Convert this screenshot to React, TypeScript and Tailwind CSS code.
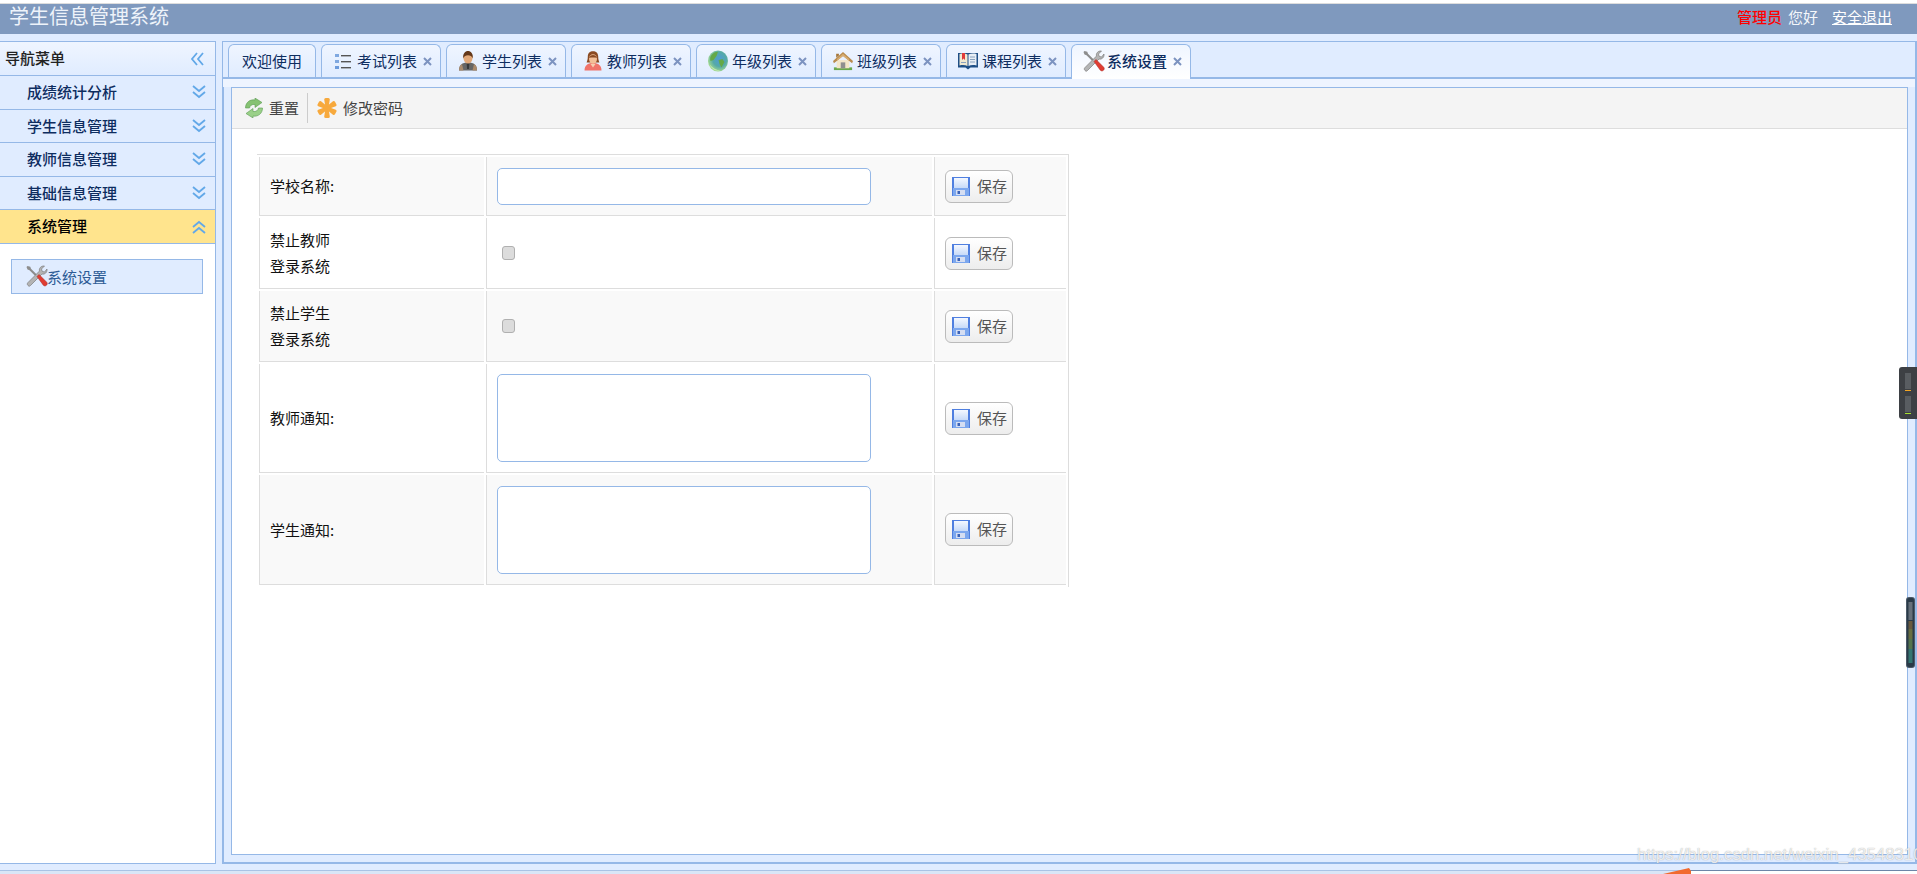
import type { ReactNode } from "react";

const IconList = () => (
  <svg width="16" height="16" viewBox="0 0 16 16">
    <rect x="0" y="1" width="4" height="3" fill="#7fa8e0" />
    <rect x="0" y="7" width="4" height="3" fill="#7fa8e0" />
    <rect x="0" y="13" width="4" height="3" fill="#6c9bdc" />
    <rect x="6" y="2" width="10" height="1.400" fill="#555" />
    <rect x="6" y="8" width="10" height="1.400" fill="#555" />
    <rect x="6" y="14" width="10" height="1.400" fill="#555" />
  </svg>
);

const IconStudent = () => (
  <svg width="20" height="20" viewBox="0 0 20 20">
    <path d="M1 19.500c0-5.500 3-8 9-8s9 2.500 9 8z" fill="#666" />
    <path d="M1 19.500c0-3.500 1-5.500 3-6.500l1.500 6.500zM19 19.500c0-3.500-1-5.500-3-6.500l-1.500 6.500z" fill="#a98a6c" />
    <path d="M8.600 12h2.800l-.5 6H9.100z" fill="#383838" />
    <ellipse cx="10" cy="7" rx="4.500" ry="5.500" fill="#e2a878" />
    <path d="M5.300 7.500C4.500 2.500 7.300 0 10 0s5.500 2.500 4.700 7.500c-.7-2.300-2.500-3.300-4.700-3.300S6 5.200 5.300 7.500z" fill="#643819" />
  </svg>
);

const IconTeacher = () => (
  <svg width="20" height="20" viewBox="0 0 20 20">
    <path d="M1.500 19.500c0-5 3-7.500 8.500-7.500s8.500 2.500 8.500 7.500z" fill="#f0736a" />
    <path d="M4.800 5.500C4.800 2 7 .3 10 .3s5.200 1.700 5.200 5.200c0 3 .6 4.500 1.200 6H3.600c.6-1.500 1.200-3 1.200-6z" fill="#8a4a22" />
    <ellipse cx="10" cy="8" rx="4" ry="4.800" fill="#f3bf98" />
    <path d="M6 7C7 4.600 8.500 4 10 4s3 .6 4 3c-2-.6-6-.6-8 0z" fill="#8a4a22" />
    <path d="M7.500 13h5L10 16.500z" fill="#f6cdb0" />
  </svg>
);

const IconGlobe = () => (
  <svg width="20" height="22" viewBox="0 0 20 22">
    <defs>
      <radialGradient id="globe" cx="58%" cy="42%" r="62%">
        <stop offset="0%" stopColor="#4f9bd6" />
        <stop offset="55%" stopColor="#55a9a8" />
        <stop offset="100%" stopColor="#a8de8c" />
      </radialGradient>
    </defs>
    <ellipse cx="10" cy="11" rx="10" ry="10.500" fill="url(#globe)" />
    <path d="M4 4.500C6 2.500 8 1.800 10 1.800L8.500 6 5.500 10l-3 1c-.8-2.500-.2-4.500 1.500-6.500zM10.500 10l4-1 2 3-3 5.500-2-3.500z" fill="#64a948" />
    <path d="M1.500 14.500C3.500 19 8 21.500 12.500 20.800 8.500 20 4.500 18 1.500 14.500z" fill="#c4e8ae" />
  </svg>
);

const IconHouse = () => (
  <svg width="22" height="20" viewBox="0 0 22 20">
    <rect x="1" y="17" width="20" height="3" fill="#69a84c" />
    <path d="M4 9h14v9H4z" fill="#f3e6c8" />
    <path d="M8.500 11.500h5V18h-5z" fill="#8f8f8f" />
    <path d="M11 0 0 10l1 2.500L11 4.500l10 8 1-2.500z" fill="#b98b4f" />
    <path d="M3.500 6.500V2h3v2z" fill="#a5763a" />
    <path d="M11 4.500 5 9.500 4 8 11 2l7 6-1 1.500z" fill="#d7ad72" />
  </svg>
);

const IconBook = () => (
  <svg width="20" height="18" viewBox="0 0 20 18">
    <path d="M0 1h20v14.500h-7.500L10 17.500l-2.500-2H0z" fill="#1f4f86" />
    <path d="M1.500 2c3-.8 6-.6 8 .5V14c-2-1-5-1.200-8-.5z" fill="#f0e8d0" />
    <path d="M18.500 2c-3-.8-6-.6-8 .5V14c2-1 5-1.200 8-.5z" fill="#e8eef5" />
    <path d="M4 1h3v7L5.500 6.500 4 8z" fill="#e03a3a" />
    <path d="M12 5h5M12 7.500h5M12 10h5M3 10.500h5" stroke="#8aa2be" strokeWidth="1" />
  </svg>
);

const IconTools = () => (
  <svg width="22" height="22" viewBox="0 0 22 22">
    <path d="M1.500 1 .5 2l1 2.500 2 .7 6 6 1.500-1.500-6-6-.7-2z" fill="#8d8d8d" />
    <path d="M2 20.500c-1-1-1-2 0-3L13.500 6c-.8-2.500 1.500-5.500 5-5L15.500 4l.7 2.300 2.300.7L21 4c.5 3.500-2.500 5.800-5 5L4.500 20.500c-1 1-1.500 1-2.500 0z" fill="#b4b4b4" stroke="#6f6f6f" strokeWidth=".6" />
    <path d="M11 11.500 13 9.500l7.500 7.500c1 1 1 2.200 0 3.200s-2.200 1-3.200 0z" fill="#e03c32" stroke="#a62720" strokeWidth=".5" />
  </svg>
);

const IconRefresh = () => (
  <svg width="18" height="20" viewBox="0 0 18 20">
    <path d="M.5 10C.5 4.500 5 1 10 2V0l7 4.500L10 9.500V6.500C7 6 5 7.500 4.500 10z" fill="#86c272" stroke="#5a9a52" strokeWidth=".6" />
    <path d="M17.500 10c0 5.500-4.500 9-9.500 8v2L1 15.500l7-5v3c3 .5 5-1 5.500-3.500z" fill="#9ad088" stroke="#5a9a52" strokeWidth=".6" />
  </svg>
);

const IconStar = () => (
  <svg width="20" height="20" viewBox="0 0 20 20">
    <g fill="#f7a93c">
      <path d="M7.200 1.500Q7.200 0 8.700 0h2.600q1.500 0 1.500 1.500L11.400 10l1.400 8.500q0 1.500-1.500 1.500H8.700q-1.500 0-1.500-1.500L8.600 10z" />
      <path d="M7.200 1.500Q7.200 0 8.700 0h2.600q1.500 0 1.500 1.500L11.400 10l1.400 8.500q0 1.500-1.500 1.500H8.700q-1.500 0-1.500-1.500L8.600 10z" transform="rotate(60 10 10)" />
      <path d="M7.200 1.500Q7.200 0 8.700 0h2.600q1.500 0 1.500 1.500L11.400 10l1.400 8.500q0 1.500-1.500 1.500H8.700q-1.500 0-1.500-1.500L8.600 10z" transform="rotate(-60 10 10)" />
    </g>
  </svg>
);

const IconSave = () => (
  <svg width="18" height="19" viewBox="0 0 18 19">
    <defs>
      <linearGradient id="disk" x1="0" y1="0" x2="0" y2="1">
        <stop offset="0%" stopColor="#f4f8ff" />
        <stop offset="100%" stopColor="#c7daf8" />
      </linearGradient>
    </defs>
    <rect width="18" height="19" fill="#4f7fe0" />
    <rect x="2" y="1" width="14" height="10" fill="url(#disk)" />
    <rect x="1" y="11" width="16" height="8" fill="#7ca7ee" />
    <rect x="4" y="13" width="9" height="5" fill="#d5def2" />
    <rect x="5.500" y="14" width="2.500" height="3" fill="#3a62b8" />
  </svg>
);

const Chevrons = ({ dir }: { dir: "down" | "up" | "left" }) => {
  const rotate = dir === "down" ? 0 : dir === "up" ? 180 : 90;
  return (
    <svg width="14" height="14" viewBox="0 0 14 14" style={{ transform: `rotate(${rotate}deg)` }}>
      <path d="M1 1 7 6l6-5M1 7l6 5 6-5" fill="none" stroke="#62a8e8" strokeWidth="1.800" />
    </svg>
  );
};

const CloseX = () => (
  <svg width="9" height="9" viewBox="0 0 9 9">
    <path d="M1 1l7 7M8 1 1 8" stroke="#7c93c0" strokeWidth="2" />
  </svg>
);

const tabs: { title: string; icon: ReactNode; active?: boolean }[] = [
  { title: "考试列表", icon: <IconList /> },
  { title: "学生列表", icon: <IconStudent /> },
  { title: "教师列表", icon: <IconTeacher /> },
  { title: "年级列表", icon: <IconGlobe /> },
  { title: "班级列表", icon: <IconHouse /> },
  { title: "课程列表", icon: <IconBook /> },
  { title: "系统设置", icon: <IconTools />, active: true },
];

const menus = ["成绩统计分析", "学生信息管理", "教师信息管理", "基础信息管理"];

function SaveButton() {
  return (
    <button className="flex h-[33px] w-[68px] items-center rounded-[6px] border border-[#bbbbbb] bg-gradient-to-b from-white to-[#ededed] pl-[6px] text-[#555]">
      <IconSave />
      <span className="ml-[7px]">保存</span>
    </button>
  );
}

function Row({
  label,
  height,
  odd,
  children,
}: {
  label: ReactNode;
  height: string;
  odd: boolean;
  children: ReactNode;
}) {
  const bg = odd ? "bg-[#f9f9f9]" : "bg-white";
  return (
    <tr>
      <td className={`${height} ${bg} border-b border-l border-[#dddddd] pl-[10px] leading-[26px] text-[#111]`}>{label}</td>
      <td className={`${bg} border-b border-l border-[#dddddd] pl-[10px]`}>{children}</td>
      <td className={`${bg} border-b border-l border-[#dddddd] pl-[10px]`}>
        <SaveButton />
      </td>
    </tr>
  );
}

const Box = ({ h }: { h: string }) => <div className={`${h} w-[374px] rounded-[5px] border border-[#95b8e7] bg-white`} />;

const Check = () => <div className="ml-[5px] h-[14px] w-[13px] rounded-[3px] border border-[#b0b0b0] bg-[#dcdcdc]" />;

export default function App() {
  return (
    <div className="relative h-[874px] w-[1917px] overflow-hidden bg-[#e0ecff] font-['Noto_Sans_CJK_SC',sans-serif] text-[15px]">
      <div className="h-[4px] border-b border-[#dddddd] bg-white" />

      <header className="flex h-[30px] items-center justify-between bg-[#7f99be] pb-[7px] pl-[9px] pr-[25px]">
        <span className="text-[20px] text-[#eef3fa]">学生信息管理系统</span>
        <div className="flex items-center pt-[3px] text-[#f4f7fb]">
          <span className="font-medium text-[#ff0000]">管理员</span>
          <span className="ml-[6px]">您好</span>
          <a className="ml-[14px] text-white underline">安全退出</a>
        </div>
      </header>

      <div className="mt-[7px] flex h-[823px]">
        <aside className="flex w-[216px] flex-col border-b border-r border-t border-[#95b8e7] bg-white">
          <div className="flex h-[34px] items-center justify-between border-b border-[#95b8e7] bg-gradient-to-b from-[#eff5ff] to-[#e0ecff] pl-[5px] pr-[11px] font-medium text-[#222]">
            导航菜单
            <Chevrons dir="left" />
          </div>
          {menus.map((m) => (
            <div
              key={m}
              className="flex h-[33.600px] items-center justify-between border-b border-[#95b8e7] bg-[#e0ecff] pl-[27px] pr-[9px] font-medium text-[#0e2d5f]"
            >
              {m}
              <Chevrons dir="down" />
            </div>
          ))}
          <div className="flex h-[33.600px] items-center justify-between border-b border-[#95b8e7] bg-[#ffe48d] pl-[27px] pr-[9px] font-medium text-black">
            系统管理
            <Chevrons dir="up" />
          </div>
          <div className="px-[11px] pt-[15px]">
            <div className="flex h-[35px] w-[192px] items-center border border-[#95b8e7] bg-[#e0ecff] pl-[14px] text-[#2e5c96]">
              <IconTools />
              <span className="-ml-px pt-[2px]">系统设置</span>
            </div>
          </div>
        </aside>

        <main className="ml-[6px] flex w-[1695px] flex-col border-b-2 border-l border-r-2 border-t border-[#95b8e7]">
          <div className="flex h-[37px] shrink-0 gap-[5px] border-b-2 border-[#95b8e7] pl-[5px] pt-[2px] text-[#0e2d5f]">
            <div className="flex h-[33px] w-[88px] items-center justify-center rounded-t-[6px] border border-b-0 border-[#95b8e7] bg-gradient-to-b from-[#eff5ff] to-[#e0ecff]">
              欢迎使用
            </div>
            {tabs.map((t) =>
              t.active ? (
                <div
                  key={t.title}
                  className="relative flex h-[35px] w-[120px] items-center rounded-t-[6px] border border-b-0 border-[#95b8e7] bg-gradient-to-b from-[#eff5ff] to-white pb-[2px] pl-[11px] font-medium"
                >
                  <span className="flex w-[22px] justify-center">{t.icon}</span>
                  <span className="ml-[2px]">{t.title}</span>
                  <span className="ml-[6px] flex">
                    <CloseX />
                  </span>
                </div>
              ) : (
                <div
                  key={t.title}
                  className="flex h-[33px] w-[120px] items-center rounded-t-[6px] border border-b-0 border-[#95b8e7] bg-gradient-to-b from-[#eff5ff] to-[#e0ecff] pl-[11px]"
                >
                  <span className="flex w-[20px] justify-center">{t.icon}</span>
                  <span className="ml-[4px]">{t.title}</span>
                  <span className="ml-[6px] flex">
                    <CloseX />
                  </span>
                </div>
              ),
            )}
          </div>

          <div className="h-[8px] shrink-0 bg-[#eef4ff]" />

          <div className="flex flex-1 flex-col border-l border-[#95b8e7] pb-[7px] pl-[7px] pr-[7px]">
            <section className="flex-1 border border-[#95b8e7] bg-white">
              <div className="flex h-[41px] items-center border-b border-[#dddddd] bg-[#f4f4f4] pl-[13px] text-[#444]">
                <IconRefresh />
                <span className="ml-[6px]">重置</span>
                <span className="ml-[8px] h-[30px] border-l border-[#cccccc]" />
                <span className="ml-[9px] flex">
                  <IconStar />
                </span>
                <span className="ml-[6px]">修改密码</span>
              </div>

              <div className="pl-[25px] pt-[25px]">
                <table className="w-[812px] table-fixed border-separate border-spacing-[2px] border-r border-t border-[#dddddd]">
                  <colgroup>
                    <col className="w-[225px]" />
                    <col className="w-[446px]" />
                    <col className="w-[132px]" />
                  </colgroup>
                  <tbody>
                    <Row label="学校名称:" height="h-[59px]" odd>
                      <Box h="h-[37px]" />
                    </Row>
                    <Row
                      label={
                        <>
                          禁止教师
                          <br />
                          登录系统
                        </>
                      }
                      height="h-[71px]"
                      odd={false}
                    >
                      <Check />
                    </Row>
                    <Row
                      label={
                        <>
                          禁止学生
                          <br />
                          登录系统
                        </>
                      }
                      height="h-[71px]"
                      odd
                    >
                      <Check />
                    </Row>
                    <Row label="教师通知:" height="h-[109px]" odd={false}>
                      <Box h="h-[88px]" />
                    </Row>
                    <Row label="学生通知:" height="h-[110px]" odd>
                      <Box h="h-[88px]" />
                    </Row>
                  </tbody>
                </table>
              </div>
            </section>
          </div>
        </main>
      </div>

      <footer className="flex h-[10px]">
        <div className="w-[1690px] pt-[6px]">
          <div className="h-[4px] border-t border-[#a9c3e5] bg-[#d9e6f7]" />
        </div>
        <div className="flex-1 pt-[6px]">
          <div className="h-[4px] border-t border-[#6d86a8] bg-white" />
        </div>
      </footer>

      {/* things that sit on top of the page */}
      <svg className="absolute left-[1660px] top-[866px]" width="32" height="8" viewBox="0 0 32 8">
        <path d="M3 8 27 2.500 29 2l2 3v3z" fill="#f26a2e" />
      </svg>

      <svg className="absolute right-0 top-[367px]" width="18" height="52" viewBox="0 0 18 52">
        <path d="M3 0h15v52H3a3 3 0 0 1-3-3V3a3 3 0 0 1 3-3z" fill="#3d4044" />
        <path d="M6 7h6M6 9h6M6 11h6M6 13h6M6 15h6M6 17h6M6 19h6M6 21h6M6 30h6M6 32h6M6 34h6M6 36h6M6 38h6M6 40h6M6 42h6M6 44h6" stroke="#777a7e" strokeWidth="1" />
        <rect x="6" y="23" width="6" height="1" fill="#f5a623" />
        <rect x="6" y="46" width="6" height="1" fill="#a6e22e" />
      </svg>

      <svg className="absolute left-[1906px] top-[597px]" width="9" height="71" viewBox="0 0 9 71">
        <rect width="9" height="71" rx="3" fill="#4c5a68" />
        <rect x="1" y="1" width="7" height="69" rx="2" fill="#2a3a48" />
        <rect x="2.500" y="5" width="4" height="18" fill="#66707a" />
        <path d="M2.500 25h4M2.500 27h4M2.500 29h4M2.500 31h4" stroke="#a87a34" strokeWidth="1" />
        <path d="M2.500 33h4M2.500 35h4M2.500 37h4M2.500 39h4M2.500 41h4" stroke="#a6a23a" strokeWidth="1" />
        <path d="M2.500 43h4M2.500 45h4M2.500 47h4M2.500 49h4M2.500 51h4" stroke="#7fae54" strokeWidth="1" />
        <path d="M2.500 53h4M2.500 55h4M2.500 57h4M2.500 59h4M2.500 61h4M2.500 63h4M2.500 65h4" stroke="#3fb09a" strokeWidth="1" />
      </svg>

      <span className="absolute left-[1637px] top-[845px] whitespace-nowrap font-['Liberation_Sans',sans-serif] text-[16.800px] leading-[20px] text-white/80 [text-shadow:0_0_1px_rgba(110,110,110,0.7)]">
        https://blog.csdn.net/weixin_43548310
      </span>
    </div>
  );
}
